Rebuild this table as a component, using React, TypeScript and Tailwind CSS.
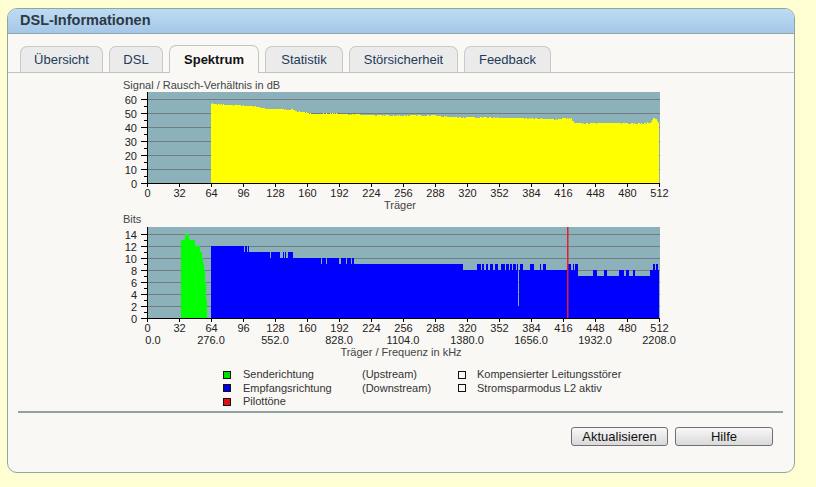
import React from "react"

// x position of carrier 0 on both charts
const X0 = 147

function makeRandom(seed: number) {
  let s = seed
  return () => {
    s = (s * 16807) % 2147483647
    return (s - 1) / 2147483646
  }
}

function interpolate(points: [number, number][], c: number) {
  for (let i = 0; i < points.length - 1; i++) {
    const [c0, v0] = points[i]
    const [c1, v1] = points[i + 1]
    if (c >= c0 && c <= c1) return v0 + ((v1 - v0) * (c - c0)) / (c1 - c0)
  }
  return points[points.length - 1][1]
}

// step area path, one pixel per carrier
function areaPath(start: number, values: number[], base: number, scale: number) {
  let d = `M${X0 + start} ${base}`
  values.forEach((v, i) => {
    const x = X0 + start + i
    const y = (base - v * scale).toFixed(1)
    d += `L${x} ${y}L${x + 1} ${y}`
  })
  d += `L${X0 + start + values.length} ${base}Z`
  return d
}

// Signal / noise ratio (dB), carriers 64..511
const snrAnchors: [number, number][] = [
  [64, 56.6], [72, 56.1], [96, 55.3], [108, 54.8], [118, 53.2], [128, 52.7], [146, 52.3],
  [150, 51.2], [158, 50.6], [162, 49.4], [192, 49.5], [224, 48.4], [256, 48.1], [286, 48.5],
  [296, 47.3], [320, 46.9], [352, 46.5], [384, 46.2], [410, 45.4], [417, 46.4], [424, 45.9],
  [427, 42.7], [460, 42.9], [496, 42.6], [503, 43.2], [506, 46.4], [509, 45.6], [511, 42.9],
]
const rndSnr = makeRandom(7)
const snr: number[] = []
for (let c = 64; c < 512; c++) snr.push(interpolate(snrAnchors, c) + rndSnr() * 0.7 - 0.35)

// Downstream bits, carriers 64..511
function range(a: number, b: number) {
  const r: number[] = []
  for (let i = a; i <= b; i++) r.push(i)
  return r
}
const spikes9 = [
  ...range(330, 333), 335, 336, 339, 340, ...range(343, 345), ...range(348, 350), ...range(354, 357),
  ...range(359, 361), 363, 364, ...range(366, 368), 370, ...range(373, 375), ...range(383, 386), 393,
  ...range(396, 398), ...range(421, 423), 426, ...range(428, 430),
]
const spikes8 = [...range(446, 449), ...range(457, 459), ...range(472, 476), ...range(479, 481), 486, 487]
const bits: number[] = []
for (let c = 64; c < 512; c++) {
  let b = 12
  if (c < 102) b = c === 97 || c === 100 ? 11 : 12
  else if (c < 146) b = [123, 133, 134, 135, 137, 139, 140].includes(c) ? 10 : 11
  else if (c < 207) b = [174, 179, 192, 193, 199, 204].includes(c) ? 9 : 10
  else if (c < 316) b = 9
  else if (c < 431) b = spikes9.includes(c) ? 9 : 8
  else if (c < 503) b = spikes8.includes(c) ? 8 : 7
  else b = [506, 507, 509, 510].includes(c) ? 9 : 8
  if (c === 371) b = 2
  bits.push(b)
}

// Upstream bits, carriers 34..59
const upBits = [13, 13, 13, 13, 14, 14, 14, 14, 13, 13, 13, 13, 13, 13, 12, 12, 12, 12, 12, 11, 11, 10, 9, 8, 6, 3]

const GRID = "#717d80"
const PLOT = "#8cb1ba"

function SnrChart() {
  const xs = range(0, 16).map((k) => k * 32)
  return (
    <svg className="block ml-[99px] mt-[5px]" width={580} height={136} viewBox="107 78 580 136" fontSize={11}>
      <text x={123} y={89} fill="#444">Signal / Rausch-Verhältnis in dB</text>
      <rect x={X0} y={92} width={513} height={91} fill={PLOT} />
      {range(1, 6).map((k) => (
        <line key={k} x1={X0} x2={660} y1={183 - 14 * k + 0.5} y2={183 - 14 * k + 0.5} stroke={GRID} />
      ))}
      <path d={areaPath(64, snr, 183, 1.4)} fill="#ffff00" shapeRendering="crispEdges" />
      <line x1={X0 + 0.5} x2={X0 + 0.5} y1={92} y2={184} stroke="#000" />
      <line x1={X0} x2={660} y1={183.5} y2={183.5} stroke="#000" />
      {range(0, 6).map((k) => (
        <g key={k}>
          <line x1={141} x2={147} y1={183 - 14 * k + 0.5} y2={183 - 14 * k + 0.5} stroke="#000" />
          <text x={137} y={183 - 14 * k + 4.5} textAnchor="end" fill="#222">{k * 10}</text>
        </g>
      ))}
      {range(0, 5).map((k) => (
        <line key={k} x1={144} x2={147} y1={183 - 7 * (2 * k + 1) + 0.5} y2={183 - 7 * (2 * k + 1) + 0.5} stroke="#000" />
      ))}
      {xs.map((c) => (
        <g key={c}>
          <line x1={X0 + c + 0.5} x2={X0 + c + 0.5} y1={183} y2={187} stroke="#000" />
          <text x={X0 + c + 0.5} y={197} textAnchor="middle" fill="#222">{c}</text>
        </g>
      ))}
      <text x={400} y={209} textAnchor="middle" fill="#444">Träger</text>
    </svg>
  )
}

function BitsChart() {
  const xs = range(0, 16).map((k) => k * 32)
  const freqs = range(0, 8).map((k) => k * 64)
  return (
    <svg className="block ml-[99px]" width={580} height={146} viewBox="107 214 580 146" fontSize={11}>
      <text x={123} y={223} fill="#444">Bits</text>
      <rect x={X0} y={227} width={513} height={91} fill={PLOT} />
      {range(1, 7).map((k) => (
        <line key={k} x1={X0} x2={660} y1={318 - 12 * k + 0.5} y2={318 - 12 * k + 0.5} stroke={GRID} />
      ))}
      <path d={areaPath(34, upBits, 318, 6)} fill="#00ff00" shapeRendering="crispEdges" />
      <path d={areaPath(64, bits, 318, 6)} fill="#0000ff" shapeRendering="crispEdges" />
      <rect x={X0 + 420} y={227} width={1.5} height={91} fill="#e0202a" />
      <line x1={X0 + 0.5} x2={X0 + 0.5} y1={227} y2={319} stroke="#000" />
      <line x1={X0} x2={660} y1={318.5} y2={318.5} stroke="#000" />
      {range(0, 7).map((k) => (
        <g key={k}>
          <line x1={141} x2={147} y1={318 - 12 * k + 0.5} y2={318 - 12 * k + 0.5} stroke="#000" />
          <text x={137} y={318 - 12 * k + 4.5} textAnchor="end" fill="#222">{k * 2}</text>
        </g>
      ))}
      {range(0, 6).map((k) => (
        <line key={k} x1={144} x2={147} y1={318 - 6 * (2 * k + 1) + 0.5} y2={318 - 6 * (2 * k + 1) + 0.5} stroke="#000" />
      ))}
      {xs.map((c) => (
        <g key={c}>
          <line x1={X0 + c + 0.5} x2={X0 + c + 0.5} y1={318} y2={322} stroke="#000" />
          <text x={X0 + c + 0.5} y={332} textAnchor="middle" fill="#222">{c}</text>
        </g>
      ))}
      {freqs.map((c) => (
        <text key={c} x={c === 0 ? 153 : X0 + c} y={344} textAnchor="middle" fill="#222">
          {(c * 4.3125).toFixed(1)}
        </text>
      ))}
      <text x={401} y={356} textAnchor="middle" fill="#444">Träger / Frequenz in kHz</text>
    </svg>
  )
}

function Swatch({ color }: { color: string }) {
  return <span className={`block w-[8px] h-[8px] border border-[#111] ${color}`} />
}

const tabs = [
  { label: "Übersicht", w: "w-[83px]" },
  { label: "DSL", w: "w-[54px]" },
  { label: "Spektrum", w: "w-[90px]", active: true },
  { label: "Statistik", w: "w-[78px]" },
  { label: "Störsicherheit", w: "w-[109px]" },
  { label: "Feedback", w: "w-[87px]" },
]

export default function App() {
  return (
    <div className="w-[816px] h-[487px] bg-[#fffed3] pt-[8px] pl-[7px] font-[Liberation_Sans,Arial,sans-serif]">
      <div className="w-[788px] h-[465px] rounded-[10px] border border-[#93a5a2] bg-[#f9f8f5] overflow-hidden">
        {/* Header */}
        <div className="h-[25px] border-b border-[#93a5a2] bg-linear-to-b from-[#bedbf3] to-[#a5c8e7] pl-[12px] flex items-center text-[14.5px] font-bold text-[#2d3943]">
          DSL-Informationen
        </div>

        {/* Tabs */}
        <div className="flex items-end gap-[6px] pl-[12px] pt-[11px] border-b border-[#c3c3c3]">
          {tabs.map((t) =>
            t.active ? (
              <div
                key={t.label}
                className={`${t.w} h-[28px] -mb-px bg-[#f9f8f5] border border-b-0 border-[#c4c4c4] rounded-t-[7px] flex items-center justify-center text-[13px] font-bold text-[#111]`}
              >
                {t.label}
              </div>
            ) : (
              <div
                key={t.label}
                className={`${t.w} h-[26px] bg-[#ebebeb] border border-b-0 border-[#c9c9c9] rounded-t-[7px] flex items-center justify-center text-[13px] text-[#233a58]`}
              >
                {t.label}
              </div>
            )
          )}
        </div>

        {/* Charts */}
        <SnrChart />
        <BitsChart />

        {/* Legend */}
        <div className="h-[51px] pt-[8px] pl-[215px] text-[11px] leading-[13.5px] text-[#333]">
          <div className="grid grid-cols-[20px_119px_96px_19px_auto] items-center">
            <Swatch color="bg-[#00e000]" />
            <span>Senderichtung</span>
            <span>(Upstream)</span>
            <Swatch color="bg-[#f9f8f5]" />
            <span>Kompensierter Leitungsstörer</span>
            <Swatch color="bg-[#0000e0]" />
            <span>Empfangsrichtung</span>
            <span>(Downstream)</span>
            <Swatch color="bg-[#f9f8f5]" />
            <span>Stromsparmodus L2 aktiv</span>
            <Swatch color="bg-[#e01010]" />
            <span>Pilottöne</span>
          </div>
        </div>

        <div className="ml-[10px] mr-[11px] h-[2px] bg-[#8fa3a0]" />

        {/* Buttons */}
        <div className="mt-[14px] pr-[21px] flex justify-end gap-[7px]">
          <button className="w-[97px] h-[19px] border border-[#707070] rounded-[3px] bg-linear-to-b from-[#f8f8f8] to-[#d9d9d9] text-[13px] leading-none text-[#111]">
            Aktualisieren
          </button>
          <button className="w-[98px] h-[19px] border border-[#707070] rounded-[3px] bg-linear-to-b from-[#f8f8f8] to-[#d9d9d9] text-[13px] leading-none text-[#111]">
            Hilfe
          </button>
        </div>
      </div>
    </div>
  )
}
